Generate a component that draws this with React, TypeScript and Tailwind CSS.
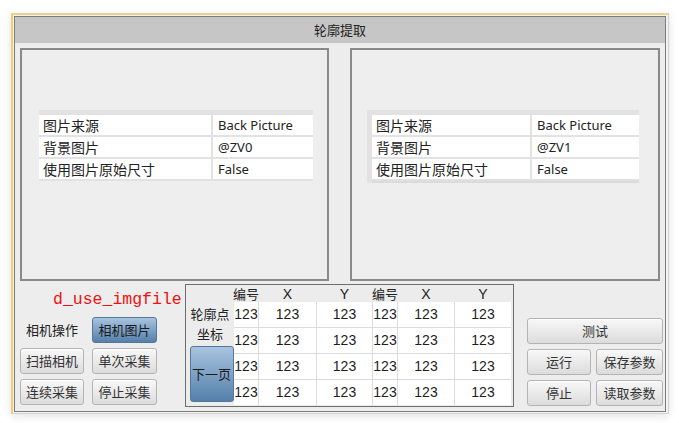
import React from 'react';

const cjk = { fontFamily: '"Noto Sans CJK SC", "Noto Sans", sans-serif' };
const latin = { fontFamily: '"Noto Sans", "Noto Sans CJK SC", sans-serif' };
const nums = { fontFamily: '"Liberation Sans", "Noto Sans CJK SC", sans-serif' };

const GrayBtn = ({ label, className = '' }: { label: string; className?: string }) => (
  <div
    className={`flex items-center justify-center h-[26px] rounded-[3px] border border-[#b4b4b4] bg-gradient-to-b from-[#f8f8f8] to-[#dcdcdc] text-[13px] text-[#333] shadow-[inset_0_1px_0_#fff] ${className}`}
    style={cjk}
  >
    {label}
  </div>
);

const BlueBtn = ({ label, className = '' }: { label: string; className?: string }) => (
  <div
    className={`flex items-center justify-center rounded-[3px] border border-[#56779a] bg-gradient-to-b from-[#a8c4e0] to-[#5580aa] text-[13px] text-[#1b1b1b] ${className}`}
    style={cjk}
  >
    {label}
  </div>
);

const PropGrid = ({ zv, right }: { zv: string; right?: boolean }) => {
  const rows = [
    ['图片来源', 'Back Picture'],
    ['背景图片', zv],
    ['使用图片原始尺寸', 'False'],
  ];
  return (
    <div className={`bg-[#e2e2e2] pt-[5px] ${right ? 'w-[272px] pl-[5px] pb-0' : 'w-[274px] pb-[2px]'}`}>
      <div className={`grid gap-[2px] ${right ? 'grid-cols-[158px_1fr]' : 'grid-cols-[172px_1fr]'}`}>
        {rows.map(([k, v]) => (
          <React.Fragment key={k}>
            <div className="h-[20px] bg-white pl-[4px] text-[14px] leading-[20px] text-[#222]" style={cjk}>
              {k}
            </div>
            <div className="h-[20px] bg-white pl-[5px] text-[13px] leading-[20px] text-[#222]" style={latin}>
              {v}
            </div>
          </React.Fragment>
        ))}
      </div>
      {right && <div className="h-[4px] bg-[linear-gradient(#e2e2e2,#d9d9d9)]" />}
    </div>
  );
};

const Panel = ({ zv, right }: { zv: string; right?: boolean }) => (
  <div className={`h-[233px] border-2 border-[#8a8a8a] bg-[#eeeeee] ${right ? 'w-[310px] pl-[15px]' : 'w-[309px] pl-[17px]'} pt-[60px]`}>
    <PropGrid zv={zv} right={right} />
  </div>
);

const cols = ['编号', 'X', 'Y', '编号', 'X', 'Y'];

const App = () => {
  return (
    <div className="w-[679px] h-[423px] bg-white overflow-hidden pt-[13px] pl-[11px]">
      <div className="w-[658px] h-[401px] border-t-2 border-l-2 border-t-[#e6d48e] border-l-[#f1cf6a] border-r border-b border-r-[#d2d2d2] border-b-[#d2d2d2] pt-[1px] pl-[1px] pr-[2px] pb-[1px] bg-[#f2f2f2] shadow-[0_2px_8px_rgba(0,0,0,0.12)]">
        <div className="h-full border border-[#7d7d7d] flex flex-col">
          <div className="h-[26px] bg-[#c6c6c6] flex items-center justify-center text-[13px] text-[#222]" style={cjk}>
            轮廓提取
          </div>
          <div className="flex-1 bg-[#ededed] flex flex-col">
            <div className="flex pt-[5px] pl-[5px] gap-[21px]">
              <Panel zv="@ZV0" />
              <Panel zv="@ZV1" right />
            </div>

            <div className="flex mt-[3px] pl-[5px]">
              {/* left controls */}
              <div className="w-[165px] overflow-hidden">
                <div
                  className="h-[33px] pl-[33px] pt-[6px] whitespace-nowrap text-[16.5px] leading-[20px] text-[#f01010]"
                  style={{ fontFamily: '"Liberation Mono", "DejaVu Sans Mono", monospace' }}
                >
                  d_use_imgfile
                </div>
                <div className="flex flex-col gap-[5px] w-[137px]">
                  <div className="flex gap-[8px]">
                    <div className="w-[64px] h-[26px] flex items-center justify-center text-[13px] text-[#222]" style={cjk}>
                      相机操作
                    </div>
                    <BlueBtn label="相机图片" className="w-[65px] h-[26px]" />
                  </div>
                  <div className="flex gap-[8px]">
                    <GrayBtn label="扫描相机" className="w-[64px]" />
                    <GrayBtn label="单次采集" className="w-[65px]" />
                  </div>
                  <div className="flex gap-[8px]">
                    <GrayBtn label="连续采集" className="w-[64px]" />
                    <GrayBtn label="停止采集" className="w-[65px]" />
                  </div>
                </div>
              </div>

              {/* coordinate table */}
              <div className="w-[329px] h-[123px] border border-[#6e6e6e] bg-[#ececec] flex">
                <div className="w-[48px] flex flex-col items-center pt-[19px]">
                  <div className="text-[13px] leading-[20px] text-[#222]" style={cjk}>轮廓点</div>
                  <div className="text-[13px] leading-[20px] text-[#222]" style={cjk}>坐标</div>
                  <BlueBtn label="下一页" className="mt-[2px] ml-[3px] w-[44px] h-[56px]" />
                </div>
                <div className="flex flex-col">
                  <div className="grid grid-cols-[24px_57px_55px_24px_56px_56px] gap-x-[1px] h-[17px]">
                    {cols.map((c, i) => (
                      <div
                        key={i}
                        className={`flex items-center justify-center whitespace-nowrap leading-none text-[#222] ${c.length > 1 ? 'text-[13px]' : 'text-[14px]'}`}
                        style={c.length > 1 ? cjk : nums}
                      >
                        {c}
                      </div>
                    ))}
                  </div>
                  <div className="grid grid-cols-[24px_57px_55px_24px_56px_56px] grid-rows-[25px_25px_25px_25px] gap-[1px] bg-[#dcdcdc]">
                    {Array.from({ length: 24 }).map((_, i) => (
                      <div
                        key={i}
                        className="bg-white flex items-center justify-center text-[14px] text-[#1e1e1e] whitespace-nowrap"
                        style={nums}
                      >
                        123
                      </div>
                    ))}
                  </div>
                </div>
              </div>

              {/* right buttons */}
              <div className="ml-[13px] w-[136px] pt-[34px] flex flex-col gap-[5px]">
                <GrayBtn label="测试" className="w-[136px] h-[25px]" />
                <div className="flex gap-[5px]">
                  <GrayBtn label="运行" className="w-[64px]" />
                  <GrayBtn label="保存参数" className="w-[67px]" />
                </div>
                <div className="flex gap-[5px]">
                  <GrayBtn label="停止" className="w-[64px]" />
                  <GrayBtn label="读取参数" className="w-[67px]" />
                </div>
              </div>
            </div>
          </div>
        </div>
      </div>
    </div>
  );
};

export default App;
